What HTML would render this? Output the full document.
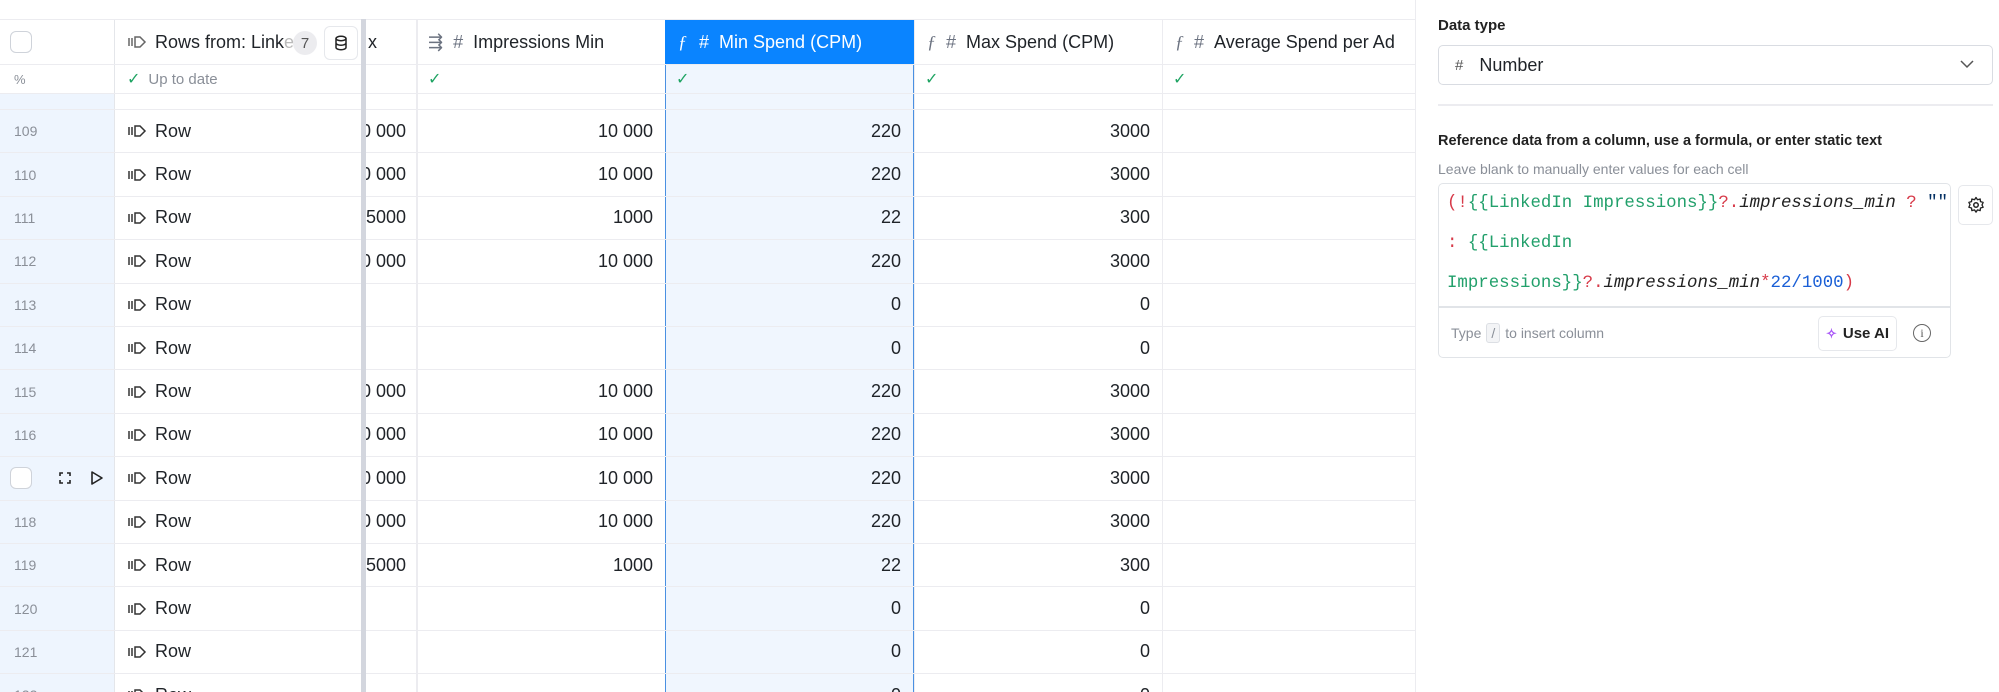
<!DOCTYPE html>
<html><head><meta charset="utf-8"><style>
*{box-sizing:border-box;margin:0;padding:0}
html,body{width:1999px;height:692px;overflow:hidden;background:#fff}
body{font-family:"Liberation Sans",sans-serif;color:#1f2328}
#wrap{position:relative;width:1999px;height:692px;overflow:hidden}
.r{position:absolute;left:0;width:1415px;height:43.4px;border-bottom:1.5px solid #ececf0}
.c{position:absolute;top:0;height:100%;display:flex;align-items:center;font-size:18px;overflow:hidden;white-space:nowrap}
.c0{left:0;width:115px;background:#eef5fe;color:#8a8f98;font-size:14px;padding-left:14px;border-right:1.5px solid #e4e6ea}
.c1{left:115px;width:246px;padding-left:12px}
.c2{left:366px;width:51px;justify-content:flex-end;padding-right:10px;border-right:1.5px solid #ececf0}
.c3{left:417px;width:248px;justify-content:flex-end;padding-right:12px;border-left:1.5px solid #ececf0}
.c4{left:665px;width:249px;justify-content:flex-end;padding-right:12px;background:#f0f6fe;border-left:1.5px solid #4a90e2;border-right:1.5px solid #4a90e2}
.c5{left:914px;width:249px;justify-content:flex-end;padding-right:12px;border-left:1.5px solid #ececf0;border-right:1.5px solid #ececf0}
.c6{left:1163px;width:252px}
.div{position:absolute;left:361px;top:19px;width:5px;height:673px;background:#d3d6de;z-index:5}
.ri{display:inline-block;width:22px;height:16px;margin-right:6px;vertical-align:middle}
.hd{top:19px;height:46px;border-top:1.5px solid #ececf0}
.st{top:65px;height:29px}
.chk{width:22px;height:22px;border:1.5px solid #cfd3da;border-radius:6px;background:#fff}
.green{color:#1fa463;font-size:16px}
.ic{color:#6b7280;margin-right:10px;font-size:18px}
</style></head><body><div id="wrap">

<div class="r hd">
 <div class="c c0" style="background:#fff;padding-left:10px"><div class="chk"></div></div>
 <div class="c c1" style="padding-left:12px"><svg class="ri" viewBox="0 0 22 16"><path d="M2 4v8M5 4v8M8 3h5l5 5-5 5H8z" fill="none" stroke="#666" stroke-width="1.5"/></svg><span>Rows from: Link</span><span style="color:#bbb">e</span>
  <span style="position:absolute;left:178px;top:11px;width:24px;height:24px;border-radius:12px;background:#ececef;color:#555;font-size:15px;display:flex;align-items:center;justify-content:center">7</span>
  <span style="position:absolute;left:209px;top:6px;width:34px;height:34px;border:1.5px solid #e6e8ec;border-radius:6px;background:#fff;display:flex;align-items:center;justify-content:center"><svg width="14" height="16" viewBox="0 0 14 16"><ellipse cx="7" cy="3.5" rx="5" ry="2.2" fill="none" stroke="#222" stroke-width="1.5"/><path d="M2 3.5v9c0 1.2 2.2 2.2 5 2.2s5-1 5-2.2v-9M2 8c0 1.2 2.2 2.2 5 2.2s5-1 5-2.2" fill="none" stroke="#222" stroke-width="1.5"/></svg></span></div>
 <div class="c c2" style="justify-content:flex-start;padding-left:2px">x</div>
 <div class="c c3" style="justify-content:flex-start;padding-left:10px"><span class="ic">⇶</span><span class="ic">#</span>Impressions Min</div>
 <div class="c c4" style="justify-content:flex-start;padding-left:12px;background:#0a84ff;color:#fff;border-color:#0a84ff"><i style="font-family:'Liberation Serif',serif;margin-right:12px">ƒ</i><span style="margin-right:10px">#</span>Min Spend (CPM)</div>
 <div class="c c5" style="justify-content:flex-start;padding-left:12px"><i class="ic" style="font-family:'Liberation Serif',serif">ƒ</i><span class="ic">#</span>Max Spend (CPM)</div>
 <div class="c c6" style="padding-left:12px"><i class="ic" style="font-family:'Liberation Serif',serif">ƒ</i><span class="ic">#</span>Average Spend per Ad</div>
</div>
<div class="r st">
 <div class="c c0" style="background:#fff;font-size:13px">%</div>
 <div class="c c1" style="font-size:15px;color:#8a8f98"><span class="green" style="margin-right:8px">✓</span>Up to date</div>
 <div class="c c2"></div>
 <div class="c c3" style="justify-content:flex-start;padding-left:10px"><span class="green">✓</span></div>
 <div class="c c4" style="justify-content:flex-start;padding-left:10px"><span class="green">✓</span></div>
 <div class="c c5" style="justify-content:flex-start;padding-left:10px"><span class="green">✓</span></div>
 <div class="c c6" style="padding-left:10px"><span class="green">✓</span></div>
</div>
<div class="r" style="top:94px;height:16px"><div class="c c0"></div><div class="c c2"></div><div class="c c3"></div><div class="c c4"></div><div class="c c5"></div></div>

<div class="r" style="top:110px"><div class="c c0">109</div><div class="c c1"><svg class="ri" viewBox="0 0 22 16"><path d="M2 4v8M5 4v8M8 3h5l5 5-5 5H8z" fill="none" stroke="#333" stroke-width="1.5"/></svg>Row</div><div class="c c2">10 000</div><div class="c c3">10 000</div><div class="c c4">220</div><div class="c c5">3000</div><div class="c c6"></div></div>
<div class="r" style="top:153.4px"><div class="c c0">110</div><div class="c c1"><svg class="ri" viewBox="0 0 22 16"><path d="M2 4v8M5 4v8M8 3h5l5 5-5 5H8z" fill="none" stroke="#333" stroke-width="1.5"/></svg>Row</div><div class="c c2">10 000</div><div class="c c3">10 000</div><div class="c c4">220</div><div class="c c5">3000</div><div class="c c6"></div></div>
<div class="r" style="top:196.8px"><div class="c c0">111</div><div class="c c1"><svg class="ri" viewBox="0 0 22 16"><path d="M2 4v8M5 4v8M8 3h5l5 5-5 5H8z" fill="none" stroke="#333" stroke-width="1.5"/></svg>Row</div><div class="c c2">5000</div><div class="c c3">1000</div><div class="c c4">22</div><div class="c c5">300</div><div class="c c6"></div></div>
<div class="r" style="top:240.2px"><div class="c c0">112</div><div class="c c1"><svg class="ri" viewBox="0 0 22 16"><path d="M2 4v8M5 4v8M8 3h5l5 5-5 5H8z" fill="none" stroke="#333" stroke-width="1.5"/></svg>Row</div><div class="c c2">10 000</div><div class="c c3">10 000</div><div class="c c4">220</div><div class="c c5">3000</div><div class="c c6"></div></div>
<div class="r" style="top:283.6px"><div class="c c0">113</div><div class="c c1"><svg class="ri" viewBox="0 0 22 16"><path d="M2 4v8M5 4v8M8 3h5l5 5-5 5H8z" fill="none" stroke="#333" stroke-width="1.5"/></svg>Row</div><div class="c c2"></div><div class="c c3"></div><div class="c c4">0</div><div class="c c5">0</div><div class="c c6"></div></div>
<div class="r" style="top:327px"><div class="c c0">114</div><div class="c c1"><svg class="ri" viewBox="0 0 22 16"><path d="M2 4v8M5 4v8M8 3h5l5 5-5 5H8z" fill="none" stroke="#333" stroke-width="1.5"/></svg>Row</div><div class="c c2"></div><div class="c c3"></div><div class="c c4">0</div><div class="c c5">0</div><div class="c c6"></div></div>
<div class="r" style="top:370.4px"><div class="c c0">115</div><div class="c c1"><svg class="ri" viewBox="0 0 22 16"><path d="M2 4v8M5 4v8M8 3h5l5 5-5 5H8z" fill="none" stroke="#333" stroke-width="1.5"/></svg>Row</div><div class="c c2">10 000</div><div class="c c3">10 000</div><div class="c c4">220</div><div class="c c5">3000</div><div class="c c6"></div></div>
<div class="r" style="top:413.8px"><div class="c c0">116</div><div class="c c1"><svg class="ri" viewBox="0 0 22 16"><path d="M2 4v8M5 4v8M8 3h5l5 5-5 5H8z" fill="none" stroke="#333" stroke-width="1.5"/></svg>Row</div><div class="c c2">10 000</div><div class="c c3">10 000</div><div class="c c4">220</div><div class="c c5">3000</div><div class="c c6"></div></div>
<div class="r" style="top:457.2px"><div class="c c0" style="padding-left:10px"><div class="chk"></div><svg style="margin-left:26px" width="14" height="14" viewBox="0 0 14 14"><path d="M2 5V2h3M9 2h3v3M12 9v3H9M5 12H2V9" fill="none" stroke="#222" stroke-width="1.6"/></svg><svg style="margin-left:18px" width="14" height="16" viewBox="0 0 14 16"><path d="M2 2l10 6-10 6z" fill="none" stroke="#222" stroke-width="1.6" stroke-linejoin="round"/></svg></div><div class="c c1"><svg class="ri" viewBox="0 0 22 16"><path d="M2 4v8M5 4v8M8 3h5l5 5-5 5H8z" fill="none" stroke="#333" stroke-width="1.5"/></svg>Row</div><div class="c c2">10 000</div><div class="c c3">10 000</div><div class="c c4">220</div><div class="c c5">3000</div><div class="c c6"></div></div>
<div class="r" style="top:500.6px"><div class="c c0">118</div><div class="c c1"><svg class="ri" viewBox="0 0 22 16"><path d="M2 4v8M5 4v8M8 3h5l5 5-5 5H8z" fill="none" stroke="#333" stroke-width="1.5"/></svg>Row</div><div class="c c2">10 000</div><div class="c c3">10 000</div><div class="c c4">220</div><div class="c c5">3000</div><div class="c c6"></div></div>
<div class="r" style="top:544px"><div class="c c0">119</div><div class="c c1"><svg class="ri" viewBox="0 0 22 16"><path d="M2 4v8M5 4v8M8 3h5l5 5-5 5H8z" fill="none" stroke="#333" stroke-width="1.5"/></svg>Row</div><div class="c c2">5000</div><div class="c c3">1000</div><div class="c c4">22</div><div class="c c5">300</div><div class="c c6"></div></div>
<div class="r" style="top:587.4px"><div class="c c0">120</div><div class="c c1"><svg class="ri" viewBox="0 0 22 16"><path d="M2 4v8M5 4v8M8 3h5l5 5-5 5H8z" fill="none" stroke="#333" stroke-width="1.5"/></svg>Row</div><div class="c c2"></div><div class="c c3"></div><div class="c c4">0</div><div class="c c5">0</div><div class="c c6"></div></div>
<div class="r" style="top:630.8px"><div class="c c0">121</div><div class="c c1"><svg class="ri" viewBox="0 0 22 16"><path d="M2 4v8M5 4v8M8 3h5l5 5-5 5H8z" fill="none" stroke="#333" stroke-width="1.5"/></svg>Row</div><div class="c c2"></div><div class="c c3"></div><div class="c c4">0</div><div class="c c5">0</div><div class="c c6"></div></div>
<div class="r" style="top:674.2px"><div class="c c0">122</div><div class="c c1"><svg class="ri" viewBox="0 0 22 16"><path d="M2 4v8M5 4v8M8 3h5l5 5-5 5H8z" fill="none" stroke="#333" stroke-width="1.5"/></svg>Row</div><div class="c c2"></div><div class="c c3"></div><div class="c c4">0</div><div class="c c5">0</div><div class="c c6"></div></div>
<div class="div"></div>

<div style="position:absolute;left:1415px;top:0;width:584px;height:692px;background:#fff;border-left:1.5px solid #ececf0">
 <div style="position:absolute;left:22px;top:17px;font-size:15px;font-weight:bold;color:#222">Data type</div>
 <div style="position:absolute;left:22px;top:45px;width:555px;height:40px;border:1.5px solid #d9dce2;border-radius:5px;display:flex;align-items:center;padding-left:16px;font-size:18px"><span style="color:#555;font-size:15px;margin-right:16px">#</span>Number
  <svg style="position:absolute;right:18px;top:14px" width="14" height="9" viewBox="0 0 14 9"><path d="M1 1l6 6 6-6" fill="none" stroke="#555" stroke-width="1.5"/></svg></div>
 <div style="position:absolute;left:22px;top:104px;width:555px;height:1.5px;background:#ececf0"></div>
 <div style="position:absolute;left:22px;top:133px;font-size:14.5px;font-weight:bold;color:#222">Reference data from a column, use a formula, or enter static text</div>
 <div style="position:absolute;left:22px;top:161px;font-size:14px;color:#8a8f98">Leave blank to manually enter values for each cell</div>
 <div style="position:absolute;left:22px;top:183px;width:513px;height:175px;border:1.5px solid #e1e4e8;border-radius:5px;font-family:'Liberation Mono',monospace;font-size:17.4px">
  <div style="position:absolute;left:8px;top:10px;white-space:nowrap"><span style="color:#d73a49">(!</span><span style="color:#22a06b">{{LinkedIn Impressions}}</span><span style="color:#d73a49">?.</span><i style="color:#222">impressions_min</i> <span style="color:#d73a49">?</span> <span style="color:#032f62">""</span></div>
  <div style="position:absolute;left:8px;top:50px;white-space:nowrap"><span style="color:#d73a49">:</span> <span style="color:#22a06b">{{LinkedIn</span></div>
  <div style="position:absolute;left:8px;top:90px;white-space:nowrap"><span style="color:#22a06b">Impressions}}</span><span style="color:#d73a49">?.</span><i style="color:#222">impressions_min</i><span style="color:#d73a49">*</span><span style="color:#1a5fd6">22/1000</span><span style="color:#d73a49">)</span></div>
  <div style="position:absolute;left:0;top:122px;width:100%;height:1.5px;background:#e1e4e8"></div>
  <div style="position:absolute;left:12px;top:134px;height:30px;display:flex;align-items:center;font-family:'Liberation Sans',sans-serif;font-size:14px;color:#8a8f98">Type <span style="display:inline-block;border:1px solid #dcdfe4;background:#f3f4f6;border-radius:3px;padding:1px 4px;margin:0 5px">/</span> to insert column</div>
  <div style="position:absolute;left:379px;top:132px;width:79px;height:35px;border:1.5px solid #e6e8ec;border-radius:5px;display:flex;align-items:center;justify-content:center;font-family:'Liberation Sans',sans-serif;font-size:15px;font-weight:bold;color:#222"><span style="color:#a855f7;margin-right:6px;font-size:13px">✧</span>Use AI</div>
  <div style="position:absolute;left:474px;top:140px;width:18px;height:18px;border:1.5px solid #666;border-radius:50%;font-family:'Liberation Serif',serif;font-size:12px;display:flex;align-items:center;justify-content:center;color:#555">i</div>
 </div>
 <div style="position:absolute;left:542px;top:185px;width:35px;height:40px;border:1.5px solid #e6e8ec;border-radius:5px;display:flex;align-items:center;justify-content:center"><svg width="18" height="18" viewBox="0 0 24 24"><circle cx="12" cy="12" r="3" fill="none" stroke="#222" stroke-width="2"/><path d="M12 2l2 3 3.5-1 .5 3.5 3.5 1-1.5 3.5 1.5 3-3.5 1-.5 3.5-3.5-1-2 3-2-3-3.5 1-.5-3.5-3.5-1 1.5-3.5-1.5-3 3.5-1 .5-3.5 3.5 1z" fill="none" stroke="#222" stroke-width="1.8" stroke-linejoin="round"/></svg></div>
</div>
</div></body></html>
